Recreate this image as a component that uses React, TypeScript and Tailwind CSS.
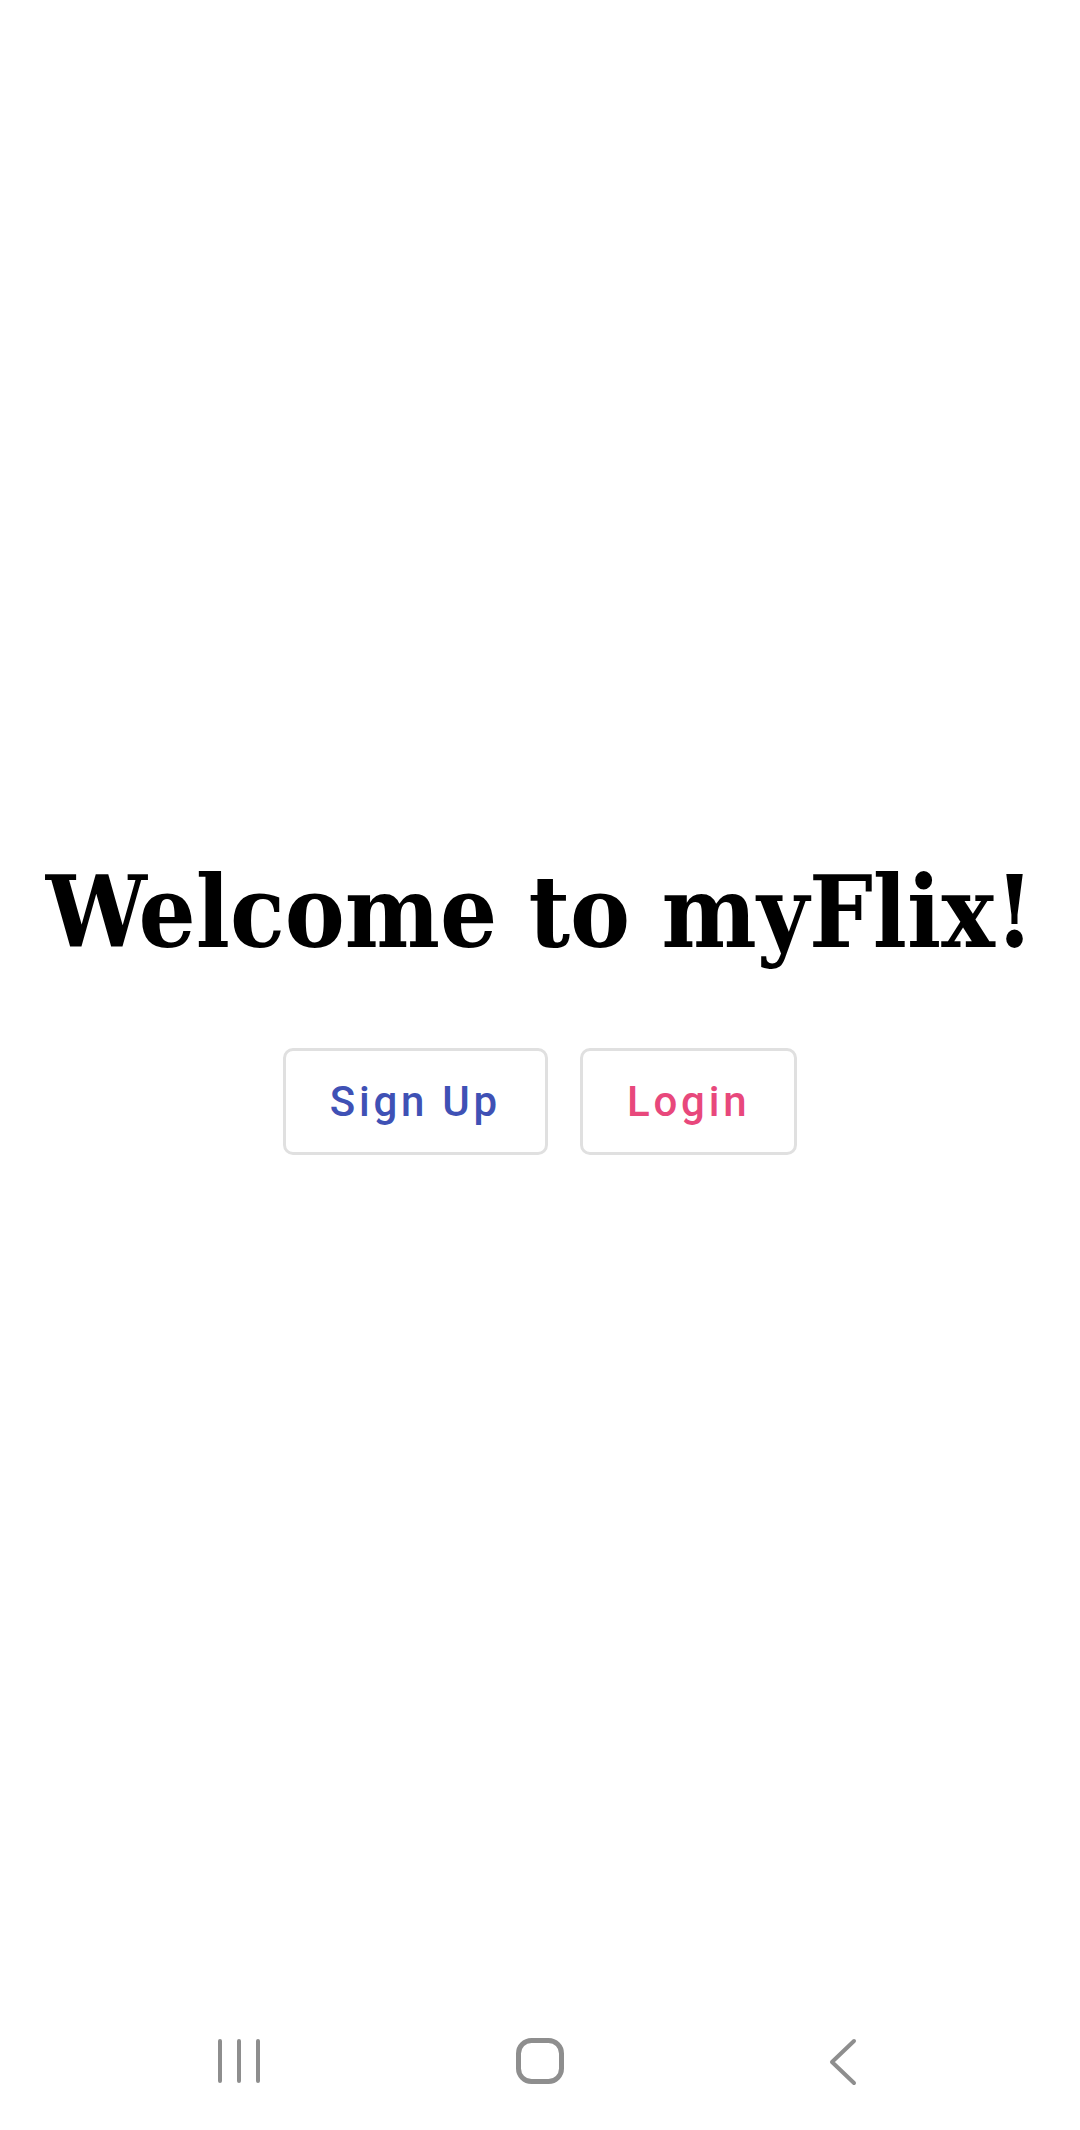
import React from "react";

const buttons = [
  { label: "Sign Up", color: "text-[#3f51b5]" },
  { label: "Login", color: "text-[#e8487c]" },
];

// bottom system bar: recents, home, back
const NavBar = () => (
  <div className="h-[126px] flex items-start pt-[33px] pl-[179px] gap-[181px] shrink-0">
    <div className="w-[120px] flex justify-center">
      <svg width="46" height="48" viewBox="0 0 46 48" fill="none" stroke="#8e8e8e" strokeWidth="4" strokeLinecap="round">
        <path d="M4 4v40M23 4v40M42 4v40" />
      </svg>
    </div>
    <div className="w-[120px] flex justify-center">
      <svg width="50" height="48" viewBox="0 0 50 48" fill="none" stroke="#8e8e8e" strokeWidth="5">
        <rect x="3.5" y="3.5" width="43" height="41" rx="13" />
      </svg>
    </div>
    <div className="w-[120px] flex justify-center pl-[6px]">
      <svg width="32" height="50" viewBox="0 0 32 50" fill="none" stroke="#8e8e8e" strokeWidth="4" strokeLinecap="round" strokeLinejoin="round">
        <path d="M26 4L4 25l22 21" />
      </svg>
    </div>
  </div>
);

export default function App() {
  return (
    <div className="w-[1080px] h-[2130px] bg-white flex flex-col">
      <main className="flex-1 flex flex-col items-center justify-center pt-[12px]">
        <h1
          className="text-[100px] font-bold leading-none text-black"
          style={{ fontFamily: '"DejaVu Serif", serif', fontStretch: "condensed" }}
        >
          Welcome to myFlix!
        </h1>
        <div className="flex gap-[32px] mt-[86px]">
          {buttons.map((b) => (
            <button
              key={b.label}
              className={`h-[107px] px-[44px] border-[3px] border-[#e0e0e0] rounded-[10px] bg-white text-[42px] font-medium tracking-[0.09em] ${b.color}`}
              style={{ fontFamily: "Roboto, sans-serif" }}
            >
              {b.label}
            </button>
          ))}
        </div>
      </main>
      <NavBar />
    </div>
  );
}
